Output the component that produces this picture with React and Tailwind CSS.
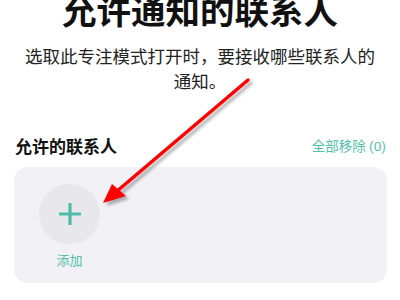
export default function App() {
  return (
    <div className="relative w-[400px] h-[300px] overflow-hidden bg-white font-['Noto_Sans_CJK_SC',sans-serif]">
      <div className="-mt-[8px] text-center text-[34.5px] leading-[34px] font-bold text-[#111111]">
        允许通知的联系人
      </div>
      <div className="mt-[17px] px-[22px] text-center text-[17.5px] leading-[25px] text-[#222222]">
        选取此专注模式打开时，要接收哪些联系人的通知。
      </div>
      <div className="mt-[41px] flex items-center justify-between pl-[15px] pr-[14px] h-[24px]">
        <span className="text-[17px] font-bold text-[#111111]">允许的联系人</span>
        <span className="text-[13.5px] text-[#55bfaa] font-['Roboto','Noto_Sans_CJK_SC',sans-serif]">全部移除 (0)</span>
      </div>
      <div className="mt-[9px] ml-[14px] mr-[13px] h-[116px] rounded-[14px] bg-[#f1f1f6] pl-[25px] pt-[17px]">
        <div className="flex w-[61px] flex-col items-center">
          <div className="flex h-[60px] w-[61px] items-center justify-center rounded-full bg-[#e7e7ec]">
            <svg width="22" height="22" viewBox="0 0 22 22">
              <path d="M11 1 V21 M1 11 H21" stroke="#4dbcaa" strokeWidth="3.2" strokeLinecap="round" />
            </svg>
          </div>
          <span className="mt-[7px] text-[13px] leading-[18px] text-[#55bfaa]">添加</span>
        </div>
      </div>
      <svg className="absolute left-0 top-0 pointer-events-none" width="400" height="300" viewBox="0 0 400 300">
        <defs>
          <filter id="sh" x="-20%" y="-20%" width="140%" height="140%">
            <feGaussianBlur stdDeviation="1.6" />
          </filter>
        </defs>
        <g transform="translate(3,3)" filter="url(#sh)" opacity="0.45">
          <path d="M248 80 L116 192" stroke="#555" strokeWidth="3.5" strokeLinecap="round" />
          <path d="M103 203 L112 184 L126 196 Z" fill="#555" />
        </g>
        <path d="M248 80 L116 192" stroke="#ff0000" strokeWidth="3.5" strokeLinecap="round" />
        <path d="M103 203 L112 184 L126 196 Z" fill="#ff0000" />
      </svg>
    </div>
  );
}
